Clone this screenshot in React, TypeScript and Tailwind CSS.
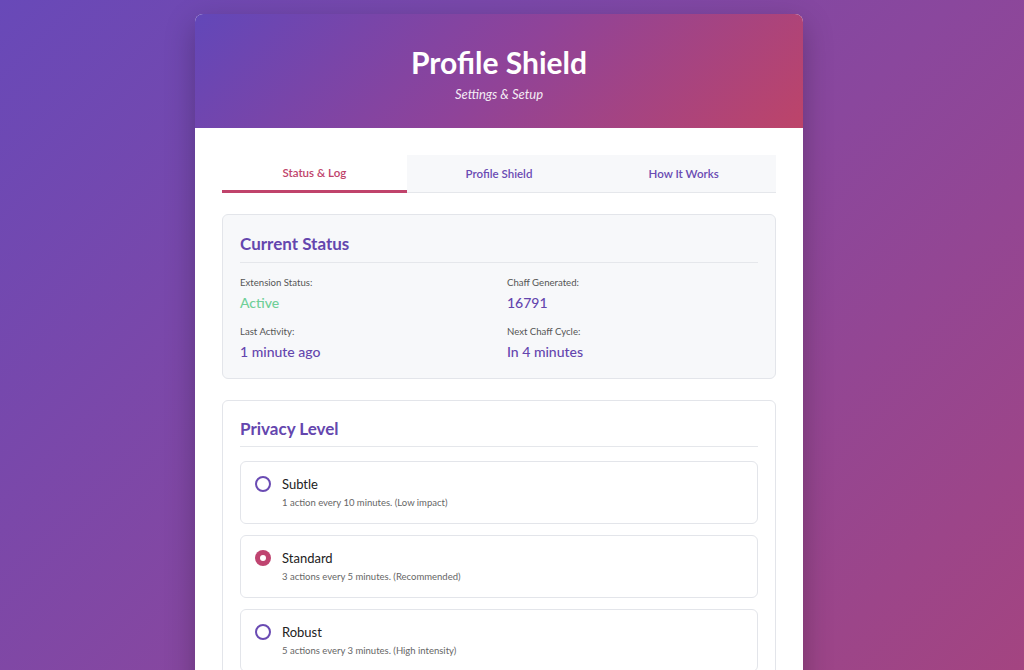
import { useState } from "react"

const levels = [
  { id: "subtle", name: "Subtle", desc: "1 action every 10 minutes. (Low impact)" },
  { id: "standard", name: "Standard", desc: "3 actions every 5 minutes. (Recommended)" },
  { id: "robust", name: "Robust", desc: "5 actions every 3 minutes. (High intensity)" },
]

const tabs = ["Status & Log", "Profile Shield", "How It Works"]

export default function App() {
  const [tab, setTab] = useState(0)
  const [level, setLevel] = useState("standard")

  return (
    <div className="min-h-screen bg-[linear-gradient(135deg,#6849b8_0%,#8a479d_55%,#a5447f_100%)] pt-[14px] pr-[26px] font-['Lato','Open_Sans',sans-serif]">
      <div className="mx-auto w-[608px] overflow-hidden rounded-lg bg-white shadow-[0_10px_30px_rgba(0,0,0,0.25)]">
        <div className="flex h-[114px] flex-col items-center justify-center bg-[linear-gradient(135deg,#6247b9_0%,#8f4399_50%,#bd4469_100%)] pt-[6px] text-white">
          <h1 className="text-[30px] font-bold leading-[36px]">Profile Shield</h1>
          <p className="mt-[5px] text-[13px] italic opacity-90">Settings &amp; Setup</p>
        </div>

        <div className="px-[27px] pt-[27px] pb-6">
          <div className="grid grid-cols-3 border-b border-[#e5e7eb]">
            {tabs.map((t, i) => (
              <button
                key={t}
                onClick={() => setTab(i)}
                className={
                  i === tab
                    ? "-mb-px h-[38px] border-b-[3px] border-[#c0436b] bg-white text-[11.5px] font-semibold text-[#c0436b]"
                    : "h-[37px] bg-[#f7f8fa] text-[11.5px] font-semibold text-[#6a4bb3]"
                }
              >
                {t}
              </button>
            ))}
          </div>

          <div className="mt-[21px] rounded-md border border-[#e3e5ea] bg-[#f7f8fa] px-[17px] pt-[16px] pb-[16px]">
            <h2 className="border-b border-[#e5e7eb] pb-[5px] text-[17px] font-bold text-[#6446ae]">Current Status</h2>
            <div className="mt-[13px] grid grid-cols-2 gap-y-[12px] gap-x-4">
              <Stat label="Extension Status:" value="Active" green />
              <Stat label="Chaff Generated:" value="16791" />
              <Stat label="Last Activity:" value="1 minute ago" />
              <Stat label="Next Chaff Cycle:" value="In 4 minutes" />
            </div>
          </div>

          <div className="mt-[21px] rounded-md border border-[#e3e5ea] bg-white px-[17px] pt-[15px] pb-[16px]">
            <h2 className="border-b border-[#e5e7eb] pb-[4px] text-[17px] font-bold text-[#6446ae]">Privacy Level</h2>
            <div className="mt-[14px] flex flex-col gap-[11px]">
              {levels.map((l) => (
                <label
                  key={l.id}
                  onClick={() => setLevel(l.id)}
                  className="flex h-[63px] cursor-pointer items-start gap-[11px] rounded-md border border-[#e3e5ea] bg-white px-[14px] pt-[13px]"
                >
                  <span
                    className={
                      level === l.id
                        ? "mt-[1px] flex h-[16px] w-[16px] items-center justify-center rounded-full bg-[#bf4470]"
                        : "mt-[1px] h-[16px] w-[16px] rounded-full border-2 border-[#6a4bb3]"
                    }
                  >
                    {level === l.id && <span className="h-[6px] w-[6px] rounded-full bg-white" />}
                  </span>
                  <span className="flex flex-col">
                    <span className="text-[13px] leading-[18px] text-[#222]">{l.name}</span>
                    <span className="mt-[3px] text-[9.5px] text-[#666]">{l.desc}</span>
                  </span>
                </label>
              ))}
            </div>
          </div>
        </div>
      </div>
    </div>
  )
}

function Stat({ label, value, green }: { label: string; value: string; green?: boolean }) {
  return (
    <div className="flex flex-col">
      <span className="text-[9.6px] text-[#555]">{label}</span>
      <span className={green ? "mt-[2px] text-[14px] font-medium text-[#6fcf97]" : "mt-[2px] text-[14px] font-medium text-[#6446ae]"}>
        {value}
      </span>
    </div>
  )
}
